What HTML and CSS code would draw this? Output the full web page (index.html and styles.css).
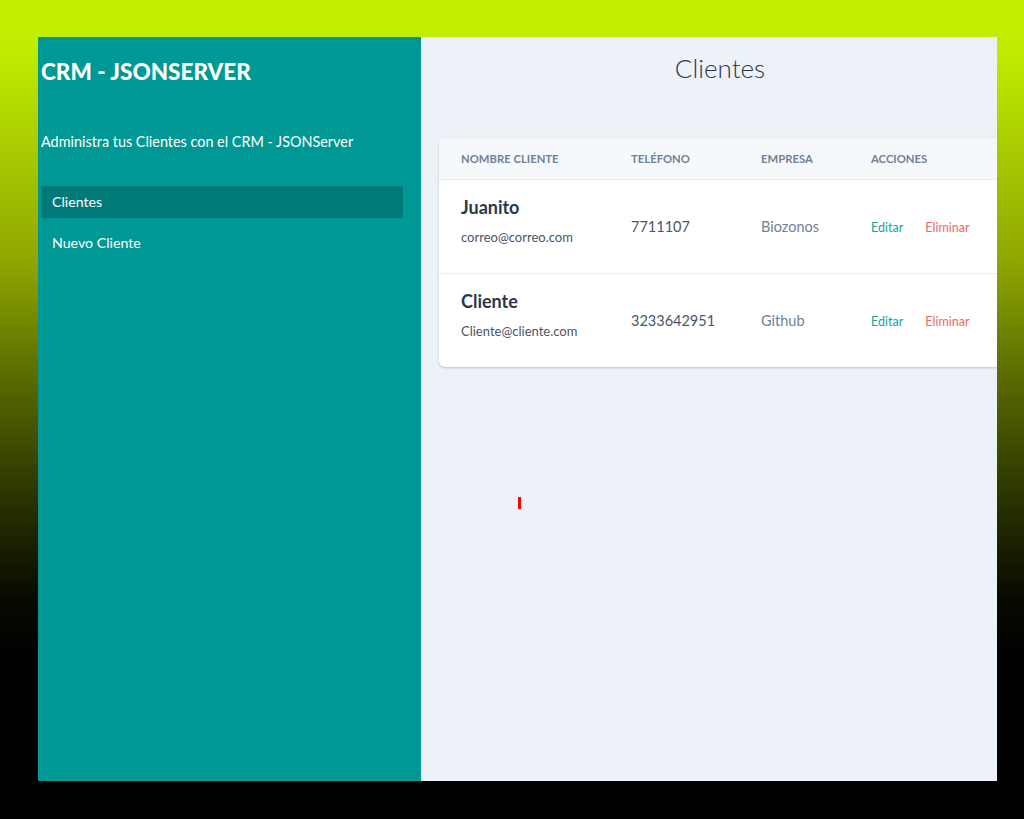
FILE: index.html
```html
<!DOCTYPE html>
<html>
<head>
    <title>CRM - JSONSERVER</title>
    <link rel="stylesheet" href="styles.css">
</head>
<body>
    <div class="frame">
        <aside class="sidebar">
            <h2 class="brand">CRM - JSONSERVER</h2>
            <p class="tagline">Administra tus Clientes con el CRM - JSONServer</p>
            <nav class="nav">
                <a href="#" class="nav-link active">Clientes</a>
                <a href="#" class="nav-link">Nuevo Cliente</a>
            </nav>
        </aside>

        <main class="main">
            <h1 class="page-title">Clientes</h1>

            <div class="card">
                <table class="clients">
                    <thead>
                        <tr>
                            <th class="col-name">Nombre Cliente</th>
                            <th class="col-phone">Teléfono</th>
                            <th class="col-company">Empresa</th>
                            <th>Acciones</th>
                        </tr>
                    </thead>
                    <tbody>
                        <tr>
                            <td class="client">
                                <div class="name">Juanito</div>
                                <div class="email">correo@correo.com</div>
                            </td>
                            <td class="phone">7711107</td>
                            <td class="company">Biozonos</td>
                            <td class="actions">
                                <a href="#" class="edit">Editar</a>
                                <a href="#" class="delete">Eliminar</a>
                            </td>
                        </tr>
                        <tr>
                            <td class="client">
                                <div class="name">Cliente</div>
                                <div class="email">Cliente@cliente.com</div>
                            </td>
                            <td class="phone">3233642951</td>
                            <td class="company">Github</td>
                            <td class="actions">
                                <a href="#" class="edit">Editar</a>
                                <a href="#" class="delete">Eliminar</a>
                            </td>
                        </tr>
                    </tbody>
                </table>
            </div>

            <span class="cursor"></span>
        </main>
    </div>
</body>
</html>
```

FILE: styles.css
```css
:root {
    --teal: #009894;
    --teal-dark: #007a79;
    --main-bg: #edf1f8;
    --text-dark: #2d3748;
    --text: #4a5568;
    --text-muted: #718096;
}

* {
    box-sizing: border-box;
}

body {
    margin: 0;
    height: 819px;
    overflow: hidden;
    font-family: Lato, "Open Sans", sans-serif;
    background: linear-gradient(to bottom,
        #c4f000 0%,
        #c0ec00 6%,
        #8fa600 32%,
        #5a6b00 46%,
        #2a3300 61%,
        #080a00 73%,
        #000 80%);
}

.frame {
    display: flex;
    width: 959px;
    height: 744px;
    margin: 37px 0 0 38px;
    overflow: hidden;
}

/* Sidebar */
.sidebar {
    flex: 0 0 383px;
    background: var(--teal);
    color: #fff;
    padding: 0 18px 0 3px;
}

.brand {
    margin: 22px 0 0;
    font-size: 22.5px;
    font-weight: 900;
    line-height: 26px;
}

.tagline {
    margin: 47px 0 0;
    font-size: 14.4px;
    line-height: 20px;
}

.nav {
    margin-top: 34px;
}

.nav-link {
    display: block;
    height: 32px;
    line-height: 32px;
    padding-left: 11px;
    color: #fff;
    text-decoration: none;
    font-size: 14.2px;
}

.nav-link + .nav-link {
    margin-top: 9px;
}

.nav-link.active {
    background: var(--teal-dark);
}

/* Main */
.main {
    position: relative;
    flex: 0 0 598px;
    background: var(--main-bg);
    padding: 0 18px;
}

.page-title {
    margin: 14px 0 0;
    text-align: center;
    font-size: 26px;
    font-weight: 300;
    line-height: 34px;
    color: #2d3748;
}

.card {
    margin-top: 53px;
    background: #fff;
    border-radius: 6px;
    overflow: hidden;
    box-shadow: 0 1px 3px rgba(0, 0, 0, 0.12), 0 1px 2px rgba(0, 0, 0, 0.08);
}

.clients {
    width: 100%;
    border-collapse: collapse;
}

.clients th {
    height: 41px;
    padding: 0 0 0 22px;
    background: #f6f9fc;
    border-bottom: 1px solid #e6edf5;
    text-align: left;
    font-size: 11.3px;
    font-weight: 700;
    text-transform: uppercase;
    color: var(--text-muted);
}

.clients .col-name { width: 170px; }
.clients .col-phone { width: 130px; }
.clients .col-company { width: 110px; }

.clients td {
    height: 94px;
    padding: 0 0 0 22px;
    border-bottom: 1px solid #e6edf5;
    vertical-align: middle;
}

.clients td.client {
    padding-bottom: 12px;
}

.clients td.actions {
    padding-bottom: 2px;
}

.clients tr:last-child td {
    border-bottom: none;
}

.name {
    font-size: 18px;
    font-weight: 700;
    color: var(--text-dark);
    line-height: 24px;
}

.email {
    margin-top: 9px;
    font-size: 13px;
    line-height: 18px;
    color: var(--text);
}

.phone {
    font-size: 14.5px;
    color: var(--text);
}

.company {
    font-size: 14.5px;
    color: var(--text-muted);
}

.actions a {
    font-size: 12.5px;
    text-decoration: none;
}

.edit {
    color: #1ba39a;
    margin-right: 18px;
}

.delete {
    color: #f56565;
}

.cursor {
    position: absolute;
    left: 97px;
    top: 460px;
    width: 3px;
    height: 12px;
    background: #f00;
}
```
